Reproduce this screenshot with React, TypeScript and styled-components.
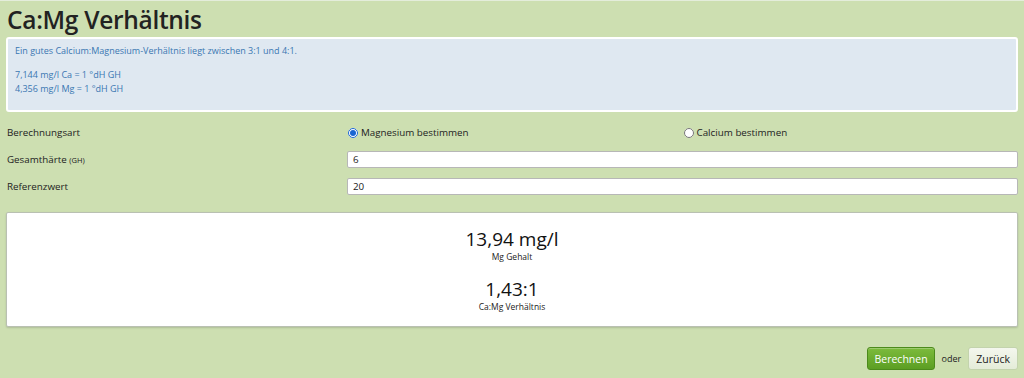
import styled, { createGlobalStyle } from 'styled-components';

const GlobalStyle = createGlobalStyle`
  html, body {
    margin: 0;
    padding: 0;
    background: #cddfb1;
  }

  body {
    font-family: 'Open Sans', 'Noto Sans', sans-serif;
    color: #222;
    border-top: 1px solid #e4eddb;
  }
`;

const results = [
  { value: '13,94 mg/l', label: 'Mg Gehalt' },
  { value: '1,43:1', label: 'Ca:Mg Verhältnis' },
];

const App = () => {
  return (
    <>
      <GlobalStyle />
      <Page>
        <Title>Ca:Mg Verhältnis</Title>

        <InfoBox>
          <InfoText>Ein gutes Calcium:Magnesium-Verhältnis liegt zwischen 3:1 und 4:1.</InfoText>
          <InfoText>
            7,144 mg/l Ca = 1 °dH GH
            <br />
            4,356 mg/l Mg = 1 °dH GH
          </InfoText>
        </InfoBox>

        <Form>
          <FieldRow>
            <Label>Berechnungsart</Label>
            <RadioGroup>
              <RadioOption>
                <Radio type='radio' name='mode' defaultChecked />
                Magnesium bestimmen
              </RadioOption>
              <RadioOption>
                <Radio type='radio' name='mode' />
                Calcium bestimmen
              </RadioOption>
            </RadioGroup>
          </FieldRow>
          <FieldRow>
            <Label>
              Gesamthärte <Unit>(GH)</Unit>
            </Label>
            <TextInput defaultValue='6' />
          </FieldRow>
          <FieldRow>
            <Label>Referenzwert</Label>
            <TextInput defaultValue='20' />
          </FieldRow>
        </Form>

        <ResultBox>
          {results.map((item) => (
            <ResultItem key={item.label}>
              <ResultValue>{item.value}</ResultValue>
              <ResultLabel>{item.label}</ResultLabel>
            </ResultItem>
          ))}
        </ResultBox>

        <Actions>
          <PrimaryBtn>Berechnen</PrimaryBtn>
          <Or>oder</Or>
          <SecondaryBtn>Zurück</SecondaryBtn>
        </Actions>
      </Page>
    </>
  );
};

export default App;

const Page = styled.div`
  display: flex;
  flex-direction: column;
  padding: 0 6px;
`;

const Title = styled.h1`
  margin: 3px 0 2px 1px;
  font-size: 24.5px;
  font-weight: 600;
  line-height: 31px;
  color: #222;
  letter-spacing: -0.3px;
`;

const InfoBox = styled.div`
  display: flex;
  flex-direction: column;
  gap: 10px;

  padding: 5px 7px 14px;
  background: #dfe8f1;
  border: 2px solid #fff;
  border-radius: 3px;
`;

const InfoText = styled.p`
  margin: 0;
  font-size: 9px;
  line-height: 14px;
  color: #3a77b2;
`;

const Form = styled.div`
  display: flex;
  flex-direction: column;
  gap: 10px;
  margin-top: 12px;
`;

const FieldRow = styled.div`
  display: grid;
  grid-template-columns: 341px 1fr;
  align-items: center;
  min-height: 17px;
`;

const Label = styled.span`
  padding-left: 1px;
  font-size: 9.8px;
`;

const Unit = styled.span`
  font-size: 7.5px;
`;

const RadioGroup = styled.div`
  display: grid;
  grid-template-columns: 1fr 1fr;
`;

const RadioOption = styled.label`
  display: flex;
  align-items: center;
  gap: 3px;
  font-size: 9.8px;
`;

const Radio = styled.input`
  width: 10px;
  height: 10px;
  margin: 0 0 0 1px;
  accent-color: #1a66d2;
`;

const TextInput = styled.input`
  height: 17px;
  box-sizing: border-box;
  padding: 0 5px;
  border: 1px solid #b7b7b7;
  border-radius: 2px;
  background: #fff;
  font-family: inherit;
  font-size: 9.8px;
  color: #222;
`;

const ResultBox = styled.div`
  display: flex;
  flex-direction: column;
  align-items: center;
  gap: 14px;

  margin-top: 17px;
  padding: 14px 0 14px;
  height: 115px;
  box-sizing: border-box;
  background: #fff;
  border: 1px solid #b9c0b2;
  border-radius: 2px;
  box-shadow: 0 1px 2px rgba(0, 0, 0, 0.15);
`;

const ResultItem = styled.div`
  display: flex;
  flex-direction: column;
  align-items: center;
`;

const ResultValue = styled.div`
  font-size: 19px;
  line-height: 24px;
  color: #111;
`;

const ResultLabel = styled.div`
  font-size: 8.5px;
  line-height: 12px;
`;

const Actions = styled.div`
  display: flex;
  justify-content: flex-end;
  align-items: center;
  gap: 5px;
  margin-top: 20px;
`;

const PrimaryBtn = styled.button`
  height: 23px;
  padding: 0 6px;
  border: 1px solid #4c8a1c;
  border-radius: 3px;
  background: linear-gradient(#7cbb3c, #5c9e23);
  color: #fff;
  font-family: inherit;
  font-size: 10.5px;
  box-shadow: inset 0 1px 0 rgba(255, 255, 255, 0.25);
`;

const Or = styled.span`
  font-size: 9px;
  margin: 0 2px;
`;

const SecondaryBtn = styled.button`
  height: 23px;
  padding: 0 7px;
  border: 1px solid #c3d3ad;
  border-radius: 3px;
  background: linear-gradient(#f4f7ee, #e4ecd8);
  color: #222;
  font-family: inherit;
  font-size: 10.5px;
`;
